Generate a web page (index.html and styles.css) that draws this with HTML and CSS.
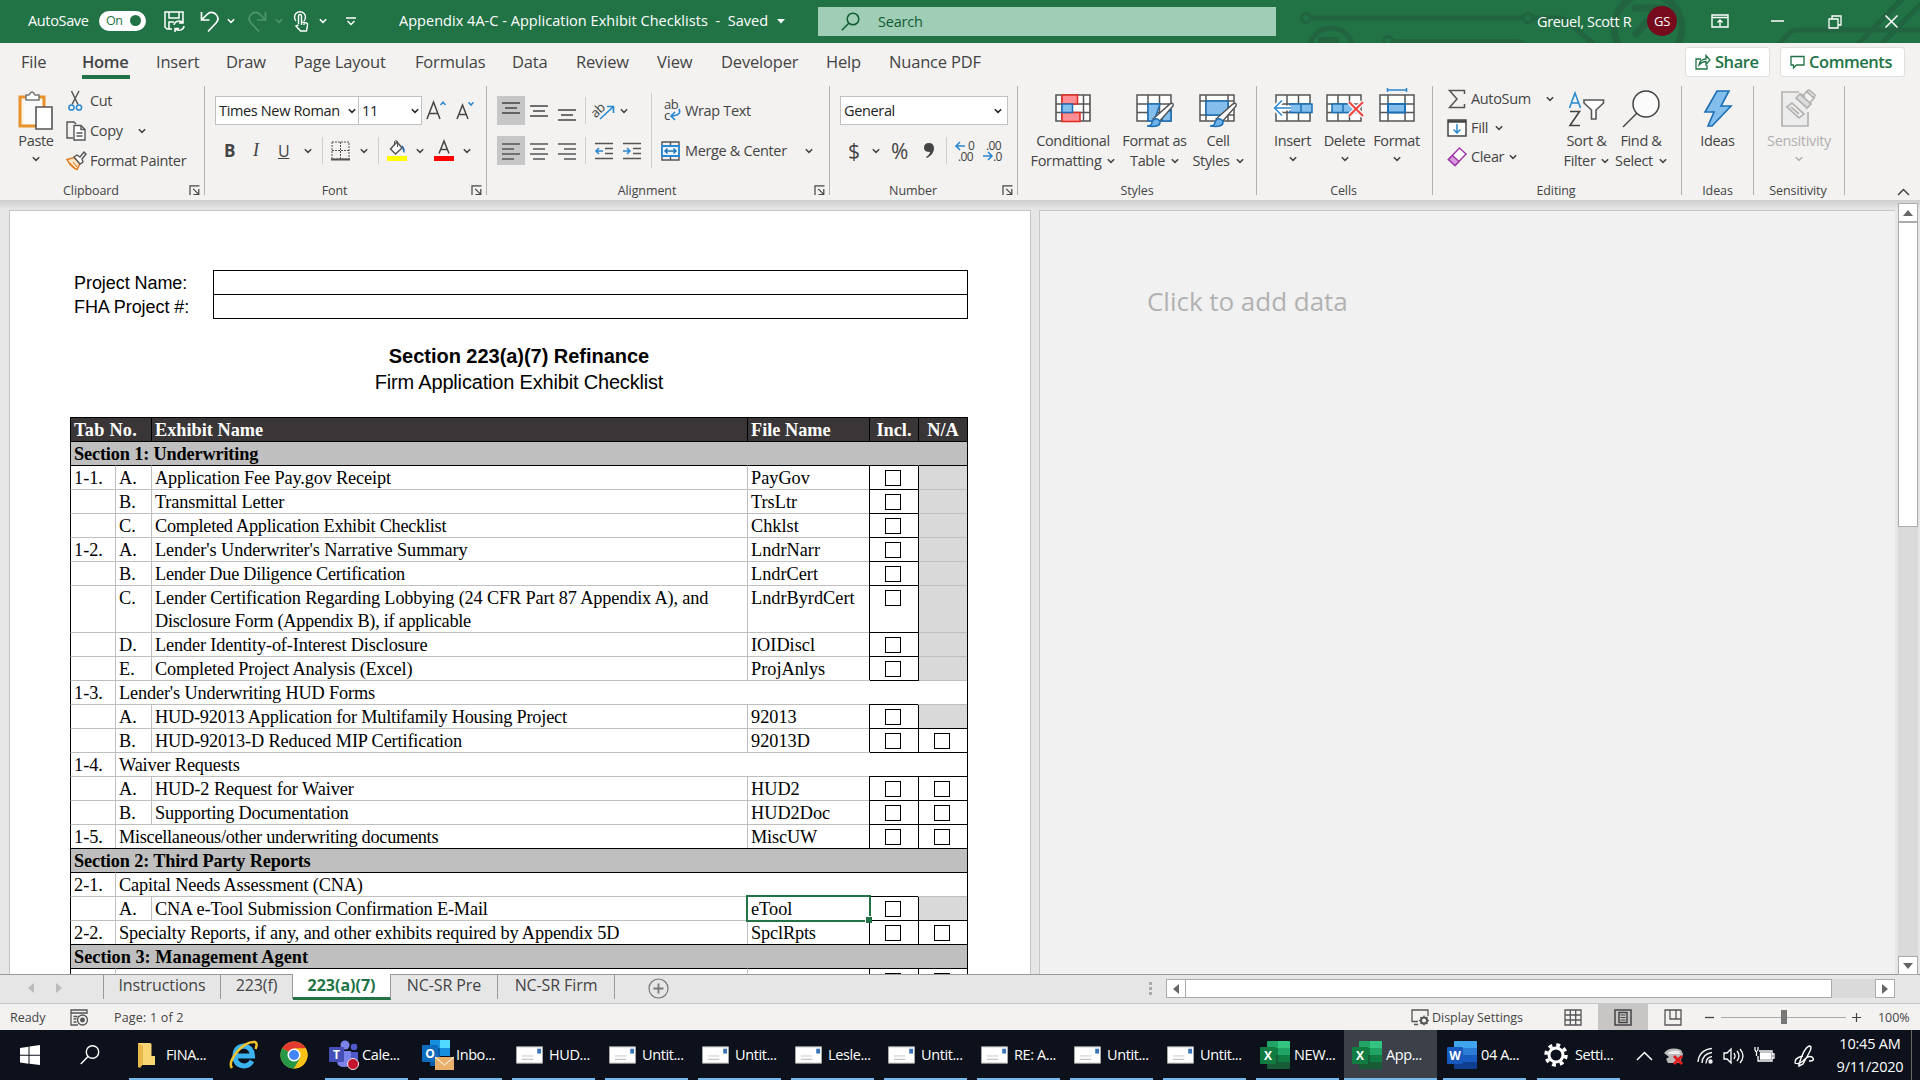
FILE: index.html
```html
<!DOCTYPE html>
<html lang="en">
<head>
<meta charset="utf-8">
<title>Appendix 4A-C - Application Exhibit Checklists</title>
<link rel="stylesheet" href="styles.css">
</head>
<body>
<svg class="defs" width="0" height="0">
  <symbol id="chev" viewBox="0 0 8 6"><path d="M.8 1.2 4 4.4 7.2 1.2" fill="none" stroke="currentColor" stroke-width="1.5"/></symbol>
  <symbol id="launch" viewBox="0 0 11 11"><path d="M1 10V.8h9.500M4.200 3.800 9.500 9.200M9.800 4v5.500H4.500" fill="none" stroke="#444" stroke-width="1.200"/></symbol>
  <symbol id="mail" viewBox="0 0 28 18"><path d="M.5.5h27v17H.5z" fill="#fff" stroke="#aaa"/><path d="M22 2.500h4v5h-4z" fill="#3a74b8"/><path d="M6 10h12" stroke="#e3e3e3" stroke-width="2"/><path d="M6 13.500h12" stroke="#c4c4c4" stroke-width="1.300"/></symbol>
  <symbol id="excel" viewBox="0 0 30 28"><path d="M7 1q0-1 1-1h10v7H7z" fill="#21a366"/><path d="M18 0h11q1 0 1 1v6H18z" fill="#33c481"/><path d="M7 7h11v7H7z" fill="#107c41"/><path d="M18 7h12v7H18z" fill="#21a366"/><path d="M7 14h11v7H7z" fill="#185c37"/><path d="M18 14h12v7H18z" fill="#107c41"/><path d="M7 21h23v6q0 1-1 1H8q-1 0-1-1z" fill="#185c37"/><rect y="6" width="16" height="17" rx="1" fill="#107c41"/><text x="8" y="19" text-anchor="middle" class="logo">X</text></symbol>
  <symbol id="word" viewBox="0 0 30 28"><path d="M7 1q0-1 1-1h21q1 0 1 1v6H7z" fill="#41a5ee"/><path d="M7 7h23v7H7z" fill="#2b7cd3"/><path d="M7 14h23v7H7z" fill="#185abd"/><path d="M7 21h23v6q0 1-1 1H8q-1 0-1-1z" fill="#103f91"/><rect y="6" width="16" height="17" rx="1" fill="#185abd"/><text x="8" y="19" text-anchor="middle" class="logo">W</text></symbol>
  <symbol id="cells" viewBox="0 0 36 28"><path d="M1 1h34v26H1z" fill="#fff" stroke="#555" stroke-width="1.600"/></symbol>
</svg>

<header class="titlebar">
  <svg class="decor" width="620" height="43" fill="none" stroke="#226340" stroke-width="5">
    <circle cx="6" cy="18" r="4.500" stroke-width="3"/><path d="M11 18h211"/><circle cx="228" cy="18" r="4.500" stroke-width="3"/><path d="M233 18h26q6 0 10 5l26 22"/>
    <circle cx="31" cy="50" r="22"/><path d="M18 40h21" stroke-width="6"/><circle cx="88" cy="41" r="4.500" stroke-width="3"/><path d="M93 41.500h122q6 0 10 4"/>
    <circle cx="348" cy="28" r="34" stroke-width="7"/><path d="M334 36l26-28M332 8h30v28" stroke-width="7"/>
    <path d="M478 45l10-11q4-4 9-4h123M557 45 606-5M580 45 625 0"/>
  </svg>
  <span class="as">AutoSave</span>
  <span class="toggle">On<i></i></span>
  <svg width="21" height="21" fill="none" stroke="#fff" stroke-width="1.500"><path d="M8 18H3L1 16V1h18v8M5 1v6h10V1M5 18v-7h5"/><path d="M10 14a5 4.500 0 0 1 9-2M19 8.500V12h-4M20 15a5 4.500 0 0 1-9 2.500M11 21v-3.500h4"/></svg>
  <svg width="19" height="21" fill="none" stroke="#fff" stroke-width="1.700"><path d="M1.500 1v8h8M1.500 9 7 3.500a6 6 0 0 1 9 0q4 4 0 8.500L8 20.500"/></svg>
  <svg class="c" width="8" height="6"><use href="#chev"/></svg>
  <svg width="19" height="21" fill="none" stroke="#4f9470" stroke-width="1.700"><path d="M17.500 1v8h-8M17.500 9 12 3.500a6 6 0 0 0-9 0q-4 4 0 8.500l8 8.500"/></svg>
  <svg class="c dim" width="8" height="6"><use href="#chev"/></svg>
  <svg width="16" height="21" fill="none" stroke="#fff" stroke-width="1.400"><path d="M3 10a5.500 5.500 0 1 1 8 0"/><path d="M5.500 13V5a1.500 1.500 0 0 1 3 0v6l5 1q1.500.500 1 2.500l-1 5.500h-6l-4.500-5 2.500-1M8.500 11v3M11 11.500V14"/></svg>
  <svg class="c" width="8" height="6"><use href="#chev"/></svg>
  <svg width="10" height="9" fill="none" stroke="#fff" stroke-width="1.400"><path d="M0 1h10M1.500 4 5 7.500 8.500 4"/></svg>
  <span class="doc">Appendix 4A-C - Application Exhibit Checklists&nbsp; -&nbsp; Saved</span>
  <svg width="8" height="5"><path d="M0 0h8L4 4.500z" fill="#fff"/></svg>
  <div class="search"><svg width="19" height="19" fill="none" stroke="#0f5c33" stroke-width="1.500"><circle cx="12" cy="7" r="5.800"/><path d="M7.800 11.200.8 18.200"/></svg><span>Search</span></div>
  <span class="user">Greuel, Scott R</span>
  <span class="avatar">GS</span>
  <svg width="18" height="14" fill="none" stroke="#fff" stroke-width="1.400"><path d="M1 1h16v12H1zM1 3.500h16M9 12V6M6.500 8.500 9 6l2.500 2.500"/></svg>
  <svg width="13" height="2"><path d="M0 1h13" stroke="#fff" stroke-width="1.500"/></svg>
  <svg width="14" height="14" fill="none" stroke="#fff" stroke-width="1.300"><path d="M1 4h9v9H1zM4 4V1h9v9h-3"/></svg>
  <svg width="13" height="13"><path d="M.5.5l12 12M12.500.5l-12 12" stroke="#fff" stroke-width="1.500"/></svg>
</header>

<nav class="tabs">
  <span>File</span><span class="on">Home</span><span>Insert</span><span>Draw</span><span>Page Layout</span><span>Formulas</span><span>Data</span><span>Review</span><span>View</span><span>Developer</span><span>Help</span><span>Nuance PDF</span>
  <span class="pill share"><svg width="16" height="16" fill="none" stroke="#217346" stroke-width="1.300"><path d="M6 5H1v10h11v-4M4 11q1-6 7-6V1.500L15 6l-4 4.500V7.500Q7 7.500 4 11z"/></svg>Share</span>
  <span class="pill"><svg width="15" height="15" fill="none" stroke="#217346" stroke-width="1.300"><path d="M1 1.500h13v8.500H6.500L3.500 13v-3H1z"/></svg>Comments</span>
</nav>

<section class="ribbon">
  <div class="group g-clip">
    <div class="body">
      <div class="big"><svg width="36" height="40" fill="none"><path d="M2 7h24v29H2z" stroke="#e8912d" stroke-width="3" fill="#fbf3e4"/><path d="M6 10h18v24H6z" fill="#fafafa"/><path d="M8 10V5h3q3-6 6 0h4v5z" fill="#fff" stroke="#777" stroke-width="1.500"/><path d="M18 17h16v22H18z" fill="#fff" stroke="#555" stroke-width="1.600"/></svg><b>Paste</b><svg class="c" width="8" height="6"><use href="#chev"/></svg></div>
      <div class="stack">
        <div class="line"><svg width="20" height="20" fill="none"><path d="M5.500 0 12 13.500M13 0 6 13.500" stroke="#555" stroke-width="1.500"/><circle cx="5.500" cy="16.500" r="2.600" stroke="#2b88d0" stroke-width="1.500"/><circle cx="13" cy="16.500" r="2.600" stroke="#2b88d0" stroke-width="1.500"/></svg><span>Cut</span></div>
        <div class="line"><svg width="20" height="20" fill="none" stroke="#555" stroke-width="1.400"><path d="M7 17H1V1h7l2 2"/><path d="M8 4.500h7l4 4V19H8z" fill="#fff"/><path d="M15 4.500v4h4M10.500 12h6M10.500 15h6"/></svg><span>Copy</span><svg class="c" width="8" height="6"><use href="#chev"/></svg></div>
        <div class="line"><svg width="20" height="20" fill="none"><path d="M1 8.500l7-2 6 6-3 6q-6-2-10-10z" fill="#fbe3c8" stroke="#e07a20" stroke-width="1.500"/><path d="M4 12l6 6M7 11l4 5" stroke="#e07a20"/><path d="M8 6l3-2 3 2 4-5 2 2-4 5 1 3-3 2z" fill="#fff" stroke="#555" stroke-width="1.400"/></svg><span>Format Painter</span></div>
      </div>
    </div>
    <div class="cap">Clipboard</div><svg class="launch" width="11" height="11"><use href="#launch"/></svg>
  </div>

  <div class="group g-font">
    <div class="body rows">
      <div class="r r1"><span class="box">Times New Roman<svg class="c" width="8" height="6"><use href="#chev"/></svg></span><span class="box">11<svg class="c" width="8" height="6"><use href="#chev"/></svg></span>
        <svg width="20" height="24" fill="none" stroke-width="1.500"><path d="M1 20 7.500 3 14 20M3 14.500h9" stroke="#444"/><path d="M14.500 6 17 3.200 19.500 6" stroke="#2b88d0"/></svg>
        <svg width="19" height="24" fill="none" stroke-width="1.500"><path d="M1 20 6.500 6 12 20M3 15.500h7.500" stroke="#444"/><path d="M12.500 3.200 15 6 17.500 3.200" stroke="#2b88d0"/></svg></div>
      <div class="r r2"><b class="bold">B</b><i class="ital">I</i><u>U</u><svg class="c" width="8" height="6"><use href="#chev"/></svg><em class="sep"></em>
        <svg width="20" height="20" fill="none" stroke="#555"><path d="M1 1h17v17H1zM9.500 1v17M1 9.500h17" stroke-dasharray="2 1"/><path d="M0 18.500h19" stroke-width="2"/></svg><svg class="c" width="8" height="6"><use href="#chev"/></svg><em class="sep"></em>
        <svg width="21" height="22" fill="none"><path d="M3.500 9 10 2l5 6-6.500 6z" fill="#fff" stroke="#555" stroke-width="1.500"/><path d="M7.500 5V1.500q1.500-2 3 0V7" stroke="#555"/><path d="M14.500 5q4 2 3 8-2-1-2-5z" fill="#1e6fb5"/><path d="M0 16h20v5H0z" fill="#ff0"/></svg><svg class="c" width="8" height="6"><use href="#chev"/></svg>
        <svg width="21" height="22" fill="none"><path d="M5 13.500 10 1l5 12.500M6.800 9.500h6.500" stroke="#444" stroke-width="1.500"/><path d="M0 16h20v5H0z" fill="#f00"/></svg><svg class="c" width="8" height="6"><use href="#chev"/></svg></div>
    </div>
    <div class="cap">Font</div><svg class="launch" width="11" height="11"><use href="#launch"/></svg>
  </div>

  <div class="group g-align">
    <div class="body rows">
      <div class="r r1">
        <span class="pressed"><svg width="18" height="20" stroke="#444" stroke-width="1.400"><path d="M0 2h18M3 7h12M0 12h18"/></svg></span>
        <svg width="18" height="20" stroke="#444" stroke-width="1.400"><path d="M0 5h18M3 10h12M0 15h18"/></svg>
        <svg width="18" height="20" stroke="#444" stroke-width="1.400"><path d="M0 9h18M3 14h12M0 19h18"/></svg><em class="sep"></em>
        <svg width="22" height="22" fill="none"><g transform="rotate(-45 6 10)"><text x="-3" y="13" class="ab">ab</text></g><path d="M6 19 19 7M13 6.500h6.500V13" stroke="#2b88d0" stroke-width="1.600"/></svg><svg class="c" width="8" height="6"><use href="#chev"/></svg><em class="sep tall"></em>
        <svg width="19" height="22" fill="none"><text x="1" y="9" class="ab">ab</text><text x="1" y="20" class="ab">c</text><path d="M16 9q3 6-7 7M12 12l-4 4 4 4" stroke="#2b88d0" stroke-width="1.700"/></svg><span>Wrap Text</span>
      </div>
      <div class="r r2">
        <span class="pressed"><svg width="18" height="20" stroke="#555" stroke-width="1.500"><path d="M0 3h18M0 8h12M0 13h18M0 18h12"/></svg></span>
        <svg width="18" height="20" stroke="#555" stroke-width="1.500"><path d="M0 3h18M3 8h12M0 13h18M3 18h12"/></svg>
        <svg width="18" height="20" stroke="#555" stroke-width="1.500"><path d="M0 3h18M6 8h12M0 13h18M6 18h12"/></svg><em class="sep"></em>
        <svg width="18" height="20" fill="none" stroke="#555" stroke-width="1.500"><path d="M0 2.500h18M10 7.500h8M10 12.500h8M0 17.500h18"/><path d="M8 10H1M4 7l-3 3 3 3" stroke="#2b88d0"/></svg>
        <svg width="18" height="20" fill="none" stroke="#555" stroke-width="1.500"><path d="M0 2.500h18M10 7.500h8M10 12.500h8M0 17.500h18"/><path d="M0 10h7M4 7l3 3-3 3" stroke="#2b88d0"/></svg><em></em>
        <svg width="19" height="20" fill="none" stroke="#555" stroke-width="1.400"><path d="M1 1h17v18H1zM9.500 1v4M9.500 15v4"/><path d="M1 5h17v10H1z" fill="#eaf4fc" stroke="#2b88d0" stroke-width="1.800"/><path d="M4 10h11M6.500 7.500 4 10l2.500 2.500M12.500 7.500 15 10l-2.500 2.500" stroke="#1b6fb5"/></svg><span>Merge &amp; Center</span><svg class="c" width="8" height="6"><use href="#chev"/></svg>
      </div>
    </div>
    <div class="cap">Alignment</div><svg class="launch" width="11" height="11"><use href="#launch"/></svg>
  </div>

  <div class="group g-num">
    <div class="body rows">
      <div class="r r1"><span class="box">General<svg class="c" width="8" height="6"><use href="#chev"/></svg></span></div>
      <div class="r r2"><span class="sym">$</span><svg class="c" width="8" height="6"><use href="#chev"/></svg><span class="sym">%</span>
        <svg width="10" height="16"><path d="M5 0q5 0 5 5.500T3 15l-1-1q4-2.500 4-5Q0 9 0 5q0-5 5-5z" fill="#444"/></svg><em class="sep"></em>
        <svg width="20" height="22" fill="none"><text x="13" y="10" class="dig">0</text><text x="3" y="21" class="dig">.00</text><path d="M10 6H1M5 2 1 6l4 4" stroke="#2b88d0" stroke-width="1.600"/></svg>
        <svg width="20" height="22" fill="none"><text x="3" y="10" class="dig">.00</text><text x="10" y="21" class="dig">.0</text><path d="M0 16h9M5 12l4 4-4 4" stroke="#2b88d0" stroke-width="1.600"/></svg></div>
    </div>
    <div class="cap">Number</div><svg class="launch" width="11" height="11"><use href="#launch"/></svg>
  </div>

  <div class="group g-styles">
    <div class="body">
      <div class="big"><svg width="36" height="40" fill="none" stroke="#555" stroke-width="1.500"><use href="#cells" y="4" width="36" height="28"/><path d="M7 5v26M28.500 5v26M1 14h34M1 22.500h34"/><path d="M7 5h15.500v9H7zM7 22.500h18v9H7z" fill="#ff8f94" stroke="#e02b20"/><path d="M7 14h10.500v8.500H7z" fill="#83beec" stroke="#1b6fb5"/></svg><b>Conditional</b><b>Formatting<svg class="c" width="8" height="6"><use href="#chev"/></svg></b></div>
      <div class="big"><svg width="38" height="40" fill="none" stroke="#555" stroke-width="1.500"><path d="M1 5h34v26H1zM12 5v26M23.500 5v26M1 14h34M1 22.500h34" fill="#fff"/><path d="M12 14h12l-6 17h-6zM27 24l8-4v11h-9z" fill="#83beec" stroke="#1b6fb5"/><path d="M17 29 34 14q4-2 3 2L22 33z" fill="#fff"/><path d="M11 36q5 0 5-4 3-6 8-1 1 7-13 5z" fill="#6fb2e8" stroke="#1b6fb5"/></svg><b>Format as</b><b>Table<svg class="c" width="8" height="6"><use href="#chev"/></svg></b></div>
      <div class="big"><svg width="38" height="40" fill="none" stroke="#555" stroke-width="1.500"><path d="M1 5h34v26H1zM7 5v26M29 5v26M1 11h34M1 25h34" fill="#fff"/><path d="M7 11h22v14H7z" fill="#83beec" stroke="#1b6fb5"/><path d="M17 29 34 14q4-2 3 2L22 33z" fill="#fff"/><path d="M11 36q5 0 5-4 3-6 8-1 1 7-13 5z" fill="#6fb2e8" stroke="#1b6fb5"/></svg><b>Cell</b><b>Styles<svg class="c" width="8" height="6"><use href="#chev"/></svg></b></div>
    </div>
    <div class="cap">Styles</div>
  </div>

  <div class="group g-cells">
    <div class="body">
      <div class="big"><svg width="40" height="40" fill="none" stroke="#555" stroke-width="1.500"><path d="M3 5h34v26H3zM14 5v26M25.500 5v26M3 14h34M3 22.500h34" fill="#fff"/><path d="M17 14h22v8.500H17zM28 14v8.500" fill="#83beec" stroke="#1b6fb5"/><path d="M18 18H2M9 10.500 1.500 18l7.500 7.500" stroke="#fff" stroke-width="5"/><path d="M18 18H1.500M9 10.500 1.500 18l7.500 7.500" stroke="#2b88d0"/></svg><b>Insert</b><svg class="c" width="8" height="6"><use href="#chev"/></svg></div>
      <div class="big"><svg width="38" height="40" fill="none" stroke="#555" stroke-width="1.500"><path d="M1 5h34v26H1zM12 5v26M23.500 5v26M1 14h34M1 22.500h34" fill="#fff"/><path d="M6 14h18l4 4-4 4.500H6zM17 14v8.500" fill="#83beec" stroke="#1b6fb5"/><path d="M23 12l14 14M37 12 23 26" stroke="#f3f2f1" stroke-width="5"/><path d="M23 12l14 14M37 12 23 26" stroke="#f04040" stroke-width="1.800"/></svg><b>Delete</b><svg class="c" width="8" height="6"><use href="#chev"/></svg></div>
      <div class="big"><svg width="36" height="40" fill="none" stroke="#555" stroke-width="1.500"><path d="M1 5h34v26H1zM9 5v26M26 5v26M1 14h34M1 22.500h34" fill="#fff"/><path d="M9 14h17v8.500H9z" fill="#83beec" stroke="#1b6fb5" stroke-width="2"/><path d="M8.500 0h19M8.500-2v4M27.500-2v4" stroke="#2b88d0"/></svg><b>Format</b><svg class="c" width="8" height="6"><use href="#chev"/></svg></div>
    </div>
    <div class="cap">Cells</div>
  </div>

  <div class="group g-edit">
    <div class="body">
      <div class="stack">
        <div class="line"><svg width="20" height="20" fill="none"><path d="M17.500 5V1.500H2.500L10 10 2.500 18.500h15V15" stroke="#555" stroke-width="1.500"/></svg><span>AutoSum</span><svg class="c" width="8" height="6"><use href="#chev"/></svg></div>
        <div class="line"><svg width="20" height="20" fill="none"><path d="M1 2h18v16H1z" fill="#fff" stroke="#444" stroke-width="1.500"/><path d="M1 3.500h18" stroke="#444" stroke-width="2.500"/><path d="M10 6v9M6.500 11.500 10 15l3.500-3.500" stroke="#2b88d0" stroke-width="1.500"/></svg><span>Fill</span><svg class="c" width="8" height="6"><use href="#chev"/></svg></div>
        <div class="line"><svg width="20" height="20" fill="none" stroke="#a03aa8" stroke-width="1.500"><path d="M12.500 1 19 7 8 18.500 1.500 12.500z" fill="#fff"/><path d="M5.500 8.500 12 14.500 8 18.500 1.500 12.500z" fill="#d79be0"/></svg><span>Clear</span><svg class="c" width="8" height="6"><use href="#chev"/></svg></div>
      </div>
      <div class="big"><svg width="38" height="40" fill="none" stroke-width="1.600"><path d="M1.500 18 7 3l5.500 15M3 13h8" stroke="#2b88d0"/><path d="M2 21.500h9.500L2 35.500h10" stroke="#444"/><path d="M16 10h19.500v3L28 20v9h-4.500v-9L16 13z" stroke="#555" fill="#fff"/></svg><b>Sort &amp;</b><b>Filter<svg class="c" width="8" height="6"><use href="#chev"/></svg></b></div>
      <div class="big"><svg width="38" height="40" fill="none" stroke="#444" stroke-width="1.500"><circle cx="24" cy="14" r="13" fill="#fbfbfb"/><path d="M15 23 1 37"/></svg><b>Find &amp;</b><b>Select<svg class="c" width="8" height="6"><use href="#chev"/></svg></b></div>
    </div>
    <div class="cap">Editing</div>
  </div>

  <div class="group g-ideas">
    <div class="body"><div class="big"><svg width="28" height="40"><path d="M13 1h12l-8 15h10L8 36H4l6-14H1z" fill="#83beec" stroke="#1b6fb5" stroke-width="1.600"/></svg><b>Ideas</b></div></div>
    <div class="cap">Ideas</div>
  </div>

  <div class="group g-sens">
    <div class="body"><div class="big off"><svg width="36" height="40" fill="none" stroke="#b5b3b1" stroke-width="1.700"><path d="M18 2H1v34h26V22" fill="#ececec"/><path d="M6 17l5-4 12 11-5 4z" fill="#f3f2f1"/><path d="M10 17l8 7" /><path d="M15 8l4-4 11 10-4 4z" fill="#ddd"/><path d="M20 4l4 3M25 1l8 7-4 5M22 6l4-5 2-1 6 5-1 3"/></svg><b>Sensitivity</b><svg class="c" width="8" height="6"><use href="#chev"/></svg></div></div>
    <div class="cap">Sensitivity</div>
  </div>
  <svg class="collapse" width="13" height="8"><path d="M1 7l5.500-5.500L12 7" fill="none" stroke="#444" stroke-width="1.500"/></svg>
</section>

<main class="work">
  <div class="page one">
    <div class="fields"><span>Project Name:</span><i></i><span>FHA Project #:</span><i></i></div>
    <h1>Section 223(a)(7) Refinance</h1>
    <h2>Firm Application Exhibit Checklist</h2>
    <div class="sheet">
      <div class="row head"><p class="w2">Tab No.</p><p>Exhibit Name</p><p>File Name</p><p class="mid">Incl.</p><p class="mid">N/A</p></div>
      <div class="row sect"><p>Section 1: Underwriting</p></div>
      <div class="row first"><p>1-1.</p><p>A.</p><p>Application Fee Pay.gov Receipt</p><p>PayGov</p><p class="ck"><i></i></p><p class="na"></p></div>
      <div class="row"><p></p><p>B.</p><p>Transmittal Letter</p><p>TrsLtr</p><p class="ck"><i></i></p><p class="na"></p></div>
      <div class="row"><p></p><p>C.</p><p class="tight">Completed Application Exhibit Checklist</p><p>Chklst</p><p class="ck"><i></i></p><p class="na"></p></div>
      <div class="row"><p>1-2.</p><p>A.</p><p class="loose">Lender's Underwriter's Narrative Summary</p><p>LndrNarr</p><p class="ck"><i></i></p><p class="na"></p></div>
      <div class="row"><p></p><p>B.</p><p class="tight">Lender Due Diligence Certification</p><p>LndrCert</p><p class="ck"><i></i></p><p class="na"></p></div>
      <div class="row dbl"><p></p><p>C.</p><p>Lender Certification Regarding Lobbying (24 CFR Part 87 Appendix A), and<br><span class="tight">Disclosure Form (Appendix B), if applicable</span></p><p>LndrByrdCert</p><p class="ck"><i></i></p><p class="na"></p></div>
      <div class="row"><p></p><p>D.</p><p>Lender Identity-of-Interest Disclosure</p><p>IOIDiscl</p><p class="ck"><i></i></p><p class="na"></p></div>
      <div class="row"><p></p><p>E.</p><p>Completed Project Analysis (Excel)</p><p>ProjAnlys</p><p class="ck"><i></i></p><p class="na"></p></div>
      <div class="row"><p>1-3.</p><p class="w5">Lender's Underwriting HUD Forms</p></div>
      <div class="row"><p></p><p>A.</p><p class="mid2">HUD-92013 Application for Multifamily Housing Project</p><p>92013</p><p class="ck"><i></i></p><p class="na"></p></div>
      <div class="row"><p></p><p>B.</p><p>HUD-92013-D Reduced MIP Certification</p><p>92013D</p><p class="ck"><i></i></p><p class="ck"><i></i></p></div>
      <div class="row"><p>1-4.</p><p class="w5">Waiver Requests</p></div>
      <div class="row"><p></p><p>A.</p><p class="loose">HUD-2 Request for Waiver</p><p>HUD2</p><p class="ck"><i></i></p><p class="ck"><i></i></p></div>
      <div class="row"><p></p><p>B.</p><p class="mid2">Supporting Documentation</p><p>HUD2Doc</p><p class="ck"><i></i></p><p class="ck"><i></i></p></div>
      <div class="row"><p>1-5.</p><p class="w2 tight">Miscellaneous/other underwriting documents</p><p>MiscUW</p><p class="ck"><i></i></p><p class="ck"><i></i></p></div>
      <div class="row sect"><p>Section 2: Third Party Reports</p></div>
      <div class="row first"><p>2-1.</p><p class="w5">Capital Needs Assessment (CNA)</p></div>
      <div class="row"><p></p><p>A.</p><p>CNA e-Tool Submission Confirmation E-Mail</p><p class="sel">eTool</p><p class="ck"><i></i></p><p class="na"></p></div>
      <div class="row"><p>2-2.</p><p class="w2">Specialty Reports, if any, and other exhibits required by Appendix 5D</p><p>SpclRpts</p><p class="ck"><i></i></p><p class="ck"><i></i></p></div>
      <div class="row sect"><p class="wide">Section 3: Management Agent</p></div>
      <div class="row first"><p></p><p class="w2"></p><p></p><p class="ck"><i></i></p><p class="ck"><i></i></p></div>
    </div>
  </div>
  <div class="page two">Click to add data</div>
  <div class="vscroll"><span class="btn"><svg width="10" height="6"><path d="M0 6 5 0l5 6z" fill="#666"/></svg></span><span class="thumb"></span><span class="btn end"><svg width="10" height="6"><path d="M0 0h10L5 6z" fill="#666"/></svg></span></div>
</main>

<div class="sheetbar">
  <svg class="tri" width="6" height="10"><path d="M6 0v10L0 5z" fill="#bbb"/></svg>
  <svg class="tri" width="6" height="10"><path d="M0 0v10l6-5z" fill="#bbb"/></svg>
  <span class="st">Instructions</span><span class="st">223(f)</span><span class="st on">223(a)(7)</span><span class="st">NC-SR Pre</span><span class="st">NC-SR Firm</span>
  <svg class="plus" width="21" height="21" fill="none" stroke="#777"><circle cx="10.500" cy="10.500" r="9.500" stroke-width="1.200"/><path d="M5.500 10.500h10M10.500 5.500v10" stroke-width="1.800"/></svg>
  <svg class="dots" width="3" height="13" fill="#aaa"><path d="M0 0h3v3H0zM0 5h3v3H0zM0 10h3v3H0z"/></svg>
  <div class="hscroll"><span class="btn"><svg width="6" height="10"><path d="M6 0v10L0 5z" fill="#666"/></svg></span><span class="thumb"></span><span class="btn end"><svg width="6" height="10"><path d="M0 0v10l6-5z" fill="#666"/></svg></span></div>
</div>

<div class="status">
  <span>Ready</span>
  <svg width="19" height="17" fill="none" stroke="#555" stroke-width="1.300"><path d="M8 16H1V1h16v4M1 4h16M3.500 7.500h4M3.500 10h3M3.500 13h3" /><circle cx="12.500" cy="11" r="5" /><circle cx="12.500" cy="11" r="1.800" fill="#555"/></svg>
  <span class="pg">Page: 1 of 2</span>
  <svg width="19" height="17" fill="none" stroke="#555" stroke-width="1.300"><path d="M7 12.500H1V1h16v6M3 15.500h4"/><circle cx="13" cy="11.500" r="3" stroke-width="2"/><path d="M13 6.500v2M13 14.500v2M8 11.500h2M16 11.500h2M9.500 8l1.500 1.500M15 13.500l1.500 1.500M16.500 8 15 9.500M11 13.500 9.500 15"/></svg>
  <span class="ds">Display Settings</span>
  <svg width="18" height="17" fill="none" stroke="#555" stroke-width="1.300"><path d="M1 1h16v15H1zM6.300 1v15M11.700 1v15M1 6h16M1 11h16"/></svg>
  <span class="cur"><svg width="18" height="17" fill="none" stroke="#444" stroke-width="1.500"><path d="M1 1h16v15H1zM5 3.500h8v10H5z"/><path d="M6.500 6h5M6.500 8.500h5M6.500 11h5" stroke-width="1"/></svg></span>
  <svg width="18" height="17" fill="none" stroke="#555" stroke-width="1.300"><path d="M1 1h16v15H1zM6 1v9h6V1M12 10h5"/></svg>
  <svg width="9" height="9"><path d="M0 4.500h9" stroke="#444" stroke-width="1.300"/></svg>
  <span class="slider"></span>
  <svg width="9" height="9"><path d="M0 4.500h9M4.500 0v9" stroke="#444" stroke-width="1.200"/></svg>
  <span class="pct">100%</span>
</div>

<footer class="taskbar">
  <span class="bare win"><svg width="20" height="20" fill="#fff"><path d="M0 3l8.500-1.300v8H0zM9.500 1.500 20 0v9.700H9.500zM0 10.700h8.500v8L0 17.400zM9.500 10.700H20V20L9.500 18.700z"/></svg></span>
  <span class="bare find"><svg width="20" height="20" fill="none" stroke="#fff" stroke-width="1.400"><circle cx="12.500" cy="7" r="6.200"/><path d="M8 11.500.8 19"/></svg></span>
  <span class="task fold"><svg width="20" height="27"><path d="M1 1h12q1.500 0 1.500 1.500V14H18v9H5L1 25z" fill="#f7d673"/><path d="M1 1l5 3v18l-3 4-2-1z" fill="#e8b84a"/></svg>FINA...</span>
  <span class="bare ie"><svg width="30" height="28" fill="none"><path d="M23 20q-3 5-8 5-9-1-9-10t9-10q8 1 8.500 10H8" stroke="#3cb3ef" stroke-width="5"/><path d="M3 27Q-1 22 8 11T26 1q3 1 .5 7" stroke="#f3c22c" stroke-width="2.500"/></svg></span>
  <span class="bare chrome"><svg width="28" height="28"><circle cx="14" cy="14" r="13.500" fill="#fbc116"/><path d="M14 14 2.300 7.200A13.500 13.500 0 0 1 25.700 7.200z" fill="#e33b2e"/><path d="M14 14 2.300 7.200A13.500 13.500 0 0 0 14 27.500l6-10z" fill="#279847"/><path d="M14 7.200h11.700a13.500 13.500 0 0 1-11.700 20.300l6-10z" fill="#fbc116"/><circle cx="14" cy="14" r="6.500" fill="#fff"/><circle cx="14" cy="14" r="5" fill="#4285f4"/></svg></span>
  <span class="task teams"><svg width="30" height="30"><circle cx="16" cy="5" r="4.500" fill="#7b83eb"/><circle cx="25" cy="7" r="3.300" fill="#5059c9"/><path d="M20 12h9v8q0 5-5 5h-4z" fill="#5059c9"/><path d="M8 11h14v10q0 6-7 6t-7-6z" fill="#7b83eb"/><rect y="7" width="15" height="15" rx="1" fill="#464eb8"/><text x="7.500" y="18.500" text-anchor="middle" class="logo">T</text><circle cx="24" cy="24" r="5.500" fill="#c4122f" stroke="#e8e8e8"/></svg>Cale...</span>
  <span class="task"><svg width="32" height="32"><path d="M8 1h20v16H8z" fill="#1490df"/><path d="M18 1h10v8H18z" fill="#50d9ff"/><path d="M8 9h10v18H8z" fill="#0a5ba8"/><rect y="6" width="16" height="17" rx="1" fill="#0f6cbd"/><text x="8" y="19" text-anchor="middle" class="logo">O</text><path d="M13 18h19v13H13z" fill="#e8b06a"/><path d="M13 18l9.500 8 9.500-8" fill="none" stroke="#fff"/></svg>Inbo...</span>
  <span class="task m"><svg width="27" height="18"><use href="#mail"/></svg>HUD...</span>
  <span class="task m"><svg width="27" height="18"><use href="#mail"/></svg>Untit...</span>
  <span class="task m"><svg width="27" height="18"><use href="#mail"/></svg>Untit...</span>
  <span class="task m"><svg width="27" height="18"><use href="#mail"/></svg>Lesle...</span>
  <span class="task m"><svg width="27" height="18"><use href="#mail"/></svg>Untit...</span>
  <span class="task m"><svg width="27" height="18"><use href="#mail"/></svg>RE: A...</span>
  <span class="task m"><svg width="27" height="18"><use href="#mail"/></svg>Untit...</span>
  <span class="task m"><svg width="27" height="18"><use href="#mail"/></svg>Untit...</span>
  <span class="task o"><svg width="30" height="28"><use href="#excel"/></svg>NEW...</span>
  <span class="task o act"><svg width="30" height="28"><use href="#excel"/></svg>App...</span>
  <span class="task o"><svg width="30" height="28"><use href="#word"/></svg>04 A...</span>
  <span class="task gear"><svg width="24" height="24" fill="none" stroke="#fff"><circle cx="12" cy="12" r="7" stroke-width="3"/><circle cx="12" cy="12" r="10" stroke-width="3.500" stroke-dasharray="3.850 4"/></svg>Setti...</span>
  <svg width="17" height="10"><path d="M1 9l7.500-7.500L16 9" fill="none" stroke="#fff" stroke-width="1.500"/></svg>
  <svg width="22" height="18"><path d="M0 6q6-7 17-3l2 4-3 9H4l-2-4 3-2z" fill="#bbb"/><path d="M3 6q5-3 12-2l1 3H5z" fill="#eee"/><path d="M10 9l8 8M18 9l-8 8" stroke="#e02020" stroke-width="3"/></svg>
  <svg width="17" height="18" fill="none" stroke="#eee" stroke-width="1.400"><path d="M1 15Q2 3 15 1.500M5 16Q5 7 15 5.500M9 16.500q0-6 6-7"/><circle cx="13.500" cy="14.500" r="1.500" fill="#fff"/></svg>
  <svg width="22" height="18" fill="none" stroke="#fff" stroke-width="1.300"><path d="M1 6h3l4-4v14l-4-4H1zM11 6q2 3 0 6M14 4q4 5 0 10M17 2q6 7 0 14"/></svg>
  <svg width="22" height="18" fill="none" stroke="#fff" stroke-width="1.300"><path d="M5 4h13v10H4V9M18 7h2v4h-2"/><path d="M6.500 6h10v6h-10z" fill="#fff"/><path d="M1 0v3q1 3 3 0V0M2.500 5v4"/></svg>
  <svg width="22" height="22" fill="none" stroke="#fff" stroke-width="1.400"><path d="M5 19Q10 3 15 1q4 0 0 7L9 19l-4 2zM9 11q-9 2-8 7 3 2 8-2 5-6 9-4 4 4-3 4"/></svg>
  <div class="clock"><span>10:45 AM</span><span>9/11/2020</span></div>
</footer>
</body>
</html>
```
FILE: styles.css
```css
* { box-sizing: border-box; margin: 0; padding: 0; }
html, body { width: 1920px; height: 1080px; overflow: hidden; }
body {
  display: flex; flex-direction: column;
  font: 15px/20px "Open Sans", "Noto Sans", sans-serif;
  letter-spacing: -.35px; color: #444; background: #e6e6e6; white-space: nowrap;
}
svg { display: block; overflow: visible; flex: none; }
.defs { position: absolute; }
i, em { font-style: normal; }
.logo { font: bold 12px "Open Sans", sans-serif; fill: #fff; letter-spacing: 0; }
.ab { font: 13px "Open Sans", sans-serif; fill: #444; letter-spacing: -.5px; }
.dig { font: 12px "Open Sans", sans-serif; fill: #444; letter-spacing: -.6px; }

/* title bar */
.titlebar {
  position: relative; height: 43px; flex: none; padding-left: 28px; background: #217346; color: #fff;
  display: grid; align-items: center; font-size: 14.500px;
  grid-template-columns: 71px 65px 36px 27px 21px 27px 18px 26px 27px 53px 378px 41px 719px 110px 64px 60px 57px 57px 40px;
}
.titlebar > * { position: relative; }
.titlebar .decor { position: absolute; left: 1300px; top: 0; overflow: hidden; }
.titlebar .dim { color: #4f9470; }
.as, .doc { padding-bottom: 2px; }
.doc { letter-spacing: .03px; }
.titlebar > svg:not(.decor):not(:nth-last-child(-n+2)) { margin-bottom: 1px; }
.toggle { width: 47px; height: 20px; margin-bottom: 2px; border-radius: 10px; background: #fff; color: #217346; font-size: 12.500px; padding: 0 5px 0 7px; display: flex; align-items: center; justify-content: space-between; }
.toggle i { width: 11px; height: 11px; border-radius: 50%; background: #217346; }
.search { width: 458px; height: 29px; background: #a0cdb5; color: #0f5c33; display: grid; grid-template-columns: 37px 1fr; align-items: center; padding-left: 23px; letter-spacing: -.2px; }
.avatar { width: 30px; height: 30px; margin-bottom: 1px; border-radius: 50%; background: #750b1c; text-align: center; line-height: 30px; font-size: 13px; }

/* ribbon tabs */
.tabs {
  height: 43px; flex: none; background: #f3f2f1; padding-left: 21px; font-size: 16.500px; line-height: 38px; letter-spacing: -.18px;
  display: grid; grid-template-columns: 61px 74px 70px 68px 121px 97px 64px 81px 64px 105px 63px 796px 95px 125px;
}
.tabs .on { width: 48px; height: 36px; border-bottom: 4px solid #217346; font-weight: 600; letter-spacing: -.3px; }
.pill { height: 30px; margin-top: 4px; background: #fff; border: 1px solid #e1dfdd; border-radius: 3px; color: #217346; font-weight: 600; display: flex; align-items: center; gap: 4px; padding-left: 9px; line-height: 28px; letter-spacing: -.45px; }
.share { width: 85px; }

/* ribbon */
.ribbon { height: 114px; flex: none; background: #f3f2f1; display: flex; align-items: flex-start; }
.group { position: relative; height: 109px; flex: none; border-right: 1px solid #b3b1af; font-size: 14.500px; }
.body { height: 94px; display: flex; }
.cap { height: 15px; line-height: 22px; text-align: center; font-size: 12.500px; letter-spacing: -.1px; }
.launch { position: absolute; right: 4px; bottom: -1px; }
.big { display: flex; flex-direction: column; align-items: center; padding-top: 4px; }
.big > svg:first-child { height: 40px; margin-bottom: 1px; }
.big b { font-weight: 400; height: 20px; display: flex; align-items: center; gap: 6px; }
.big > .c { margin-top: 5px; }
.off { color: #b1b0af; }
.line { height: 30px; display: grid; align-items: center; grid-template-columns: 24px 48px 10px; }
.box { height: 29px; background: #fff; border: 1px solid #c3c1c0; color: #222; display: flex; align-items: center; justify-content: space-between; padding: 0 2px 0 3px; }
.box + .box { margin-left: -1px; }
.rows { flex-direction: column; padding-top: 4px; }
.r { display: grid; align-items: center; grid-template-rows: 100%; }
.r1 { height: 41px; }
.r2 { height: 39px; }
.sep { width: 1px; height: 27px; background: #d0cecc; }
.tall { height: 75px; align-self: start; margin-top: 3px; }
.pressed { width: 28px; height: 29px; background: #c6c6c6; display: grid; place-items: center; margin-left: -5px; }
.bold { font-size: 17px; font-weight: 700; margin-left: -1px; }
.ital { font: italic 18px "Liberation Serif", serif; }
.r u { font-size: 16px; }
.sym { font-size: 21px; letter-spacing: 0; }

.g-clip { width: 205px; }
.g-clip .big { width: 54px; margin-left: 9px; margin-right: 3px; }
.g-clip .cap { padding-right: 22px; }
.g-font { width: 282px; padding-left: 10px; }
.g-font .r1 { grid-template-columns: 144px 63px 4px 30px 20px; }
.g-font .r1 svg:nth-of-type(1):not(.c) { grid-column: 4; }
.g-font .r2 { grid-template-columns: 28px 25px 26px 18px 9px 29px 18px 9px 29px 18px 29px 8px; padding-left: 10px; }
.g-font .cap { padding-right: 32px; }
.g-align { width: 343px; padding-left: 15px; }
.g-align .r1 { grid-template-columns: 28px 28px 27px 9px 26px 31px 12px 22px 70px; }
.g-align .r2 { grid-template-columns: 28px 28px 27px 10px 28px 28px 10px 24px 120px 10px; }
.g-align .cap { padding-right: 37px; }
.g-num { width: 188px; padding-left: 10px; }
.g-num .r1 { grid-template-columns: 168px; }
.g-num .box { padding-right: 5px; }
.g-num .r2 { grid-template-columns: 24px 19px 33px 22px 9px 28px 20px; padding-left: 8px; }
.g-num .cap { padding-right: 31px; }
.g-styles { width: 239px; padding-left: 9px; }
.g-styles .cap { padding-right: 9px; }
.g-styles .big:nth-child(1) { width: 92px; }
.g-styles .big:nth-child(2) { width: 71px; }
.g-styles .big:nth-child(3) { width: 56px; }
.g-cells { width: 176px; padding-left: 10px; }
.g-cells .cap { padding-right: 12px; }
.g-cells .big:nth-child(1) { width: 51px; }
.g-cells .big:nth-child(2) { width: 53px; }
.g-cells .big:nth-child(3) { width: 51px; }
.g-edit { width: 249px; padding-left: 14px; }
.g-edit .cap { padding-right: 16px; }
.g-edit .stack { width: 112px; margin-top: -1px; }
.g-edit .line { height: 29px; grid-template-columns: 24px 75px 8px; }
.g-edit .line:first-child { height: 28px; }
.g-edit .line:nth-child(2) { grid-template-columns: 24px 24px 8px; }
.g-edit .line:nth-child(3) { grid-template-columns: 24px 38px 8px; }
.g-edit .big { width: 55px; margin-left: 0; }
.g-edit .big + .big { width: 56px; margin-left: -1px; }
.g-ideas { width: 72px; }
.g-sens { width: 91px; }
.g-ideas .big, .g-sens .big { width: 100%; }
.g-sens .cap { padding-right: 2px; }
.collapse { margin: 102px 0 0 52px; }

/* worksheet */
.work { height: 775px; flex: none; display: flex; padding: 10px 0 0 9px; background: linear-gradient(#cdcdcd, #e6e6e6 9px) 0 0 / 100% 774px no-repeat #e6e6e6; box-shadow: inset 0 -1px #999; overflow: hidden; }
.page { border: 1px solid #c6c6c6; border-bottom: 0; height: 764px; overflow: hidden; }
.one { width: 1022px; background: #fff; color: #000; padding: 59px 0 0 60px; letter-spacing: 0; margin-right: 8px; }
.two { width: 856px; border-right: 0; background: #f1f1f1; color: #b2b2b2; font-size: 26px; line-height: 36px; letter-spacing: -.02px; padding: 72px 0 0 107px; margin-right: 3px; }
.fields { display: grid; grid-template-columns: 143px 755px; grid-template-rows: 24px 25px; font: 18px/27px "Liberation Sans", Arial, sans-serif; letter-spacing: -.06px; }
.fields span { padding-left: 4px; }
.fields i { border: 1px solid #000; }
.fields i:nth-of-type(1) { border-bottom: 0; }
h1, h2 { font: bold 20px/26px "Liberation Sans", Arial, sans-serif; text-align: center; width: 898px; }
h1 { margin-top: 24px; letter-spacing: -.03px; }
h2 { font-weight: 400; letter-spacing: -.18px; }
.sheet { width: 898px; margin-top: 22px; border-right: 1px solid #000; font: 18.300px/25px "Liberation Serif", "Times New Roman", serif; }
.row { display: grid; grid-template-columns: 45px 36px 596px 122px 49px 49px; height: 24px; }
.row p { border-left: 1px solid #bfbfbf; border-top: 1px solid #bfbfbf; padding-left: 3px; height: 24px; }
.row p:first-child { border-left-color: #000; }
.row p:nth-child(3), .row .w2:nth-child(2), .row .w5 { letter-spacing: -.15px; }
.row p.tight:nth-child(n), .row .tight { letter-spacing: -.28px; }
.row p.mid2:nth-child(n) { letter-spacing: -.21px; }
.row p.loose:nth-child(n) { letter-spacing: -.08px; }
.row.head p:nth-child(n) { letter-spacing: 0; }
.row.head p:nth-child(1) { letter-spacing: .25px; }
.first p { border-top-color: #000; }
.w2 { grid-column: span 2; }
.w5 { grid-column: span 5; }
.row.head p { background: #3a3637; color: #fff; font-weight: bold; border-color: #000; }
.row .mid { text-align: center; padding: 0; }
.row.sect p { grid-column: span 6; background: #bfbfbf; border-color: #000; font-weight: bold; letter-spacing: -.16px; }
.row.sect p.wide { letter-spacing: 0; }
.dbl { height: 47px; line-height: 23px; }
.row.dbl p { height: 47px; padding-top: 1px; }
.row .ck.ck { position: relative; z-index: 1; border-color: #000; box-shadow: 1px 1px #000; padding: 4px 0 0 15px; }
.ck i { display: block; width: 16px; height: 16px; border: 1px solid #000; }
.row .na { background: #d9d9d9; }
.row .sel { position: relative; z-index: 2; height: 27px; margin: -1px -2px -2px -1px; border: 2px solid #217346; padding-left: 3px; }
.sel::after { content: ""; position: absolute; right: -3px; bottom: -3px; width: 6px; height: 6px; background: #217346; border: solid #fff; border-width: 1px 0 0 1px; }

.vscroll { width: 20px; height: 772px; margin-top: -7px; background: #dadada; display: flex; flex-direction: column; }
.btn { width: 20px; height: 19px; background: #fff; border: 1px solid #ababab; display: grid; place-items: center; flex: none; }
.vscroll .thumb { height: 305px; background: #fff; border: 1px solid #ababab; }
.btn.end { margin-top: auto; }

/* sheet tabs */
.sheetbar { height: 29px; flex: none; border-bottom: 1px solid #c6c6c6; display: flex; position: relative; font-size: 16px; line-height: 21px; letter-spacing: -.1px; }
.tri { margin: 8px 0 0 28px; }
.tri + .tri { margin: 8px 41px 0 22px; }
.st { height: 24px; border-right: 1px solid #999; text-align: center; width: 117px; }
.st:nth-of-type(1) { border-left: 1px solid #999; width: 118px; }
.st:nth-of-type(2) { width: 72px; }
.st.on { width: 98px; height: 26px; margin-top: -1px; background: #fff; border-bottom: 3px solid #217346; color: #217346; font-weight: 700; letter-spacing: 0; line-height: 22px; }
.st:nth-of-type(4) { width: 107px; }
.plus { margin: 3px 480px 0 33px; }
.dots { margin-top: 7px; }
.hscroll { width: 729px; height: 19px; margin: 4px 0 0 14px; background: #dadada; display: flex; }
.hscroll .thumb { width: 646px; background: #fff; border: 1px solid #ababab; border-left: 0; }
.hscroll .end { margin: 0 0 0 auto; }

/* status bar */
.status { height: 26px; flex: none; background: #f3f2f1; display: grid; align-items: center; padding-left: 10px; font-size: 12.500px; line-height: 22px; letter-spacing: -.05px;
  grid-template-columns: 60px 44px 1297px 21px 132px 34px 66px 41px 16px 131px 26px 32px; }
.status span:not(.cur):not(.slider) { padding-top: 1px; }
.pg { letter-spacing: .2px; }
.cur { width: 50px; height: 26px; background: #c8c6c4; display: grid; place-items: center; }
.slider { width: 125px; height: 14px; background: linear-gradient(#777, #777) 60px 0 / 6px 14px no-repeat, linear-gradient(#aaa, #aaa) 0 7px / 125px 1px no-repeat; }

/* taskbar */
.taskbar { height: 51px; flex: none; background: #0c111b; color: #fff; font-size: 14.500px; letter-spacing: -.4px; display: grid; align-items: center;
  grid-template-columns: 80px 49px 96px 55px 45px 94px 93px repeat(8, 93px) 88px 99px 94px 99px 28px 33px 26px 31px 40px 38px 83px; }
.task { height: 51px; width: 83px; padding: 2px 0 0 4px; display: flex; align-items: center; gap: 6px; border-bottom: 3px solid #76b9ed; overflow: hidden; }
.bare { padding: 0 0 2px 4px; }
.win { padding-left: 20px; }
.find { padding-left: 0; }
.fold { padding-left: 8px; width: 84px; gap: 9px; }
.chrome { padding-left: 0; }
.teams { gap: 3px; }
.teams + .task { gap: 2px; padding-left: 3px; }
.o { gap: 4px; }
.act { width: 93px; padding-left: 8px; background: #3b4049; }
.gear { gap: 7px; padding-left: 7px; }
.clock { height: 51px; width: 80px; border-right: 1px solid #666; display: flex; flex-direction: column; align-items: center; line-height: 23px; padding: 2px 3px 0 0; letter-spacing: -.2px; }
```
